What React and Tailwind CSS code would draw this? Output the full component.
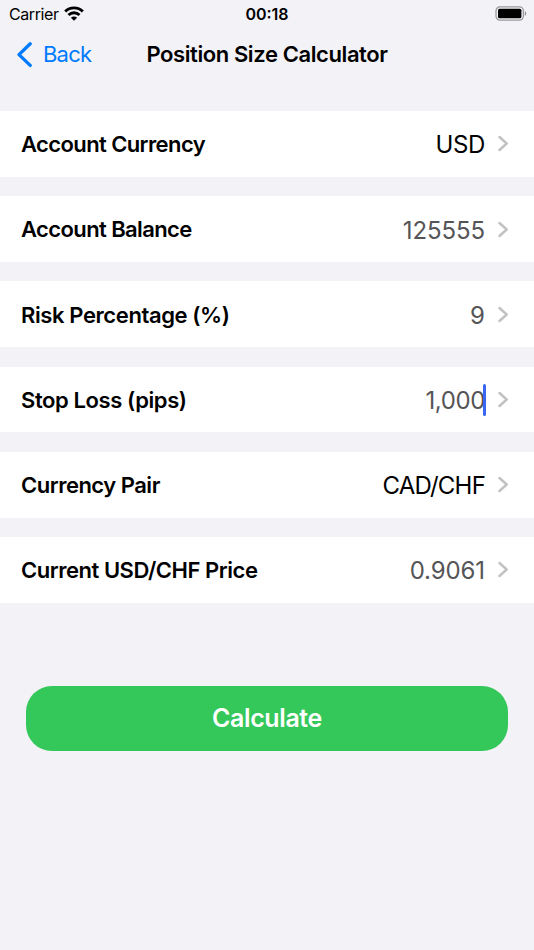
const rows = [
  { label: "Account Currency", value: "USD", labelClass: "tracking-[-0.6px]", valueClass: "tracking-[-0.4px] text-black" },
  { label: "Account Balance", value: "125555", labelClass: "tracking-[-0.6px]", valueClass: "tracking-[-0.1px] text-[#555557]" },
  { label: "Risk Percentage (%)", value: "9", labelClass: "tracking-[-0.4px]", valueClass: "text-[#555557]" },
  { label: "Stop Loss (pips)", value: "1,000", labelClass: "tracking-[-0.4px]", valueClass: "tracking-[-0.4px] text-[#555557]", focused: true },
  { label: "Currency Pair", value: "CAD/CHF", labelClass: "tracking-[-0.5px]", valueClass: "tracking-[-0.8px] text-black" },
  { label: "Current USD/CHF Price", value: "0.9061", labelClass: "tracking-[-0.47px]", valueClass: "tracking-[-0.1px] text-[#555557]" },
];

function WifiIcon() {
  return (
    <svg className="-mt-[2px]" width="20" height="15" viewBox="0 0 20 15" fill="none" stroke="#000" strokeWidth="2.900">
      <path d="M1.200 5.500C6 .6 14 .6 18.800 5.500" />
      <path d="M4.500 9c3.100-3 7.900-3 11 0" />
      <path d="M10 14.700 6.900 11.700c1.700-1.600 4.500-1.600 6.200 0z" fill="#000" stroke="none" />
    </svg>
  );
}

function BatteryIcon() {
  return (
    <svg className="-mt-[2px]" width="32" height="15" viewBox="0 0 32 15" fill="none">
      <rect x="1" y="0.900" width="27.400" height="13.200" rx="4" stroke="#9a9a9d" strokeWidth="1.300" />
      <rect x="3" y="2.800" width="23.400" height="9.400" rx="1.500" fill="#000" />
      <path d="M29.900 5.200c1.700.6 1.700 4 0 4.600z" fill="#8a8a8d" />
    </svg>
  );
}

function StatusBar() {
  return (
    <div className="grid h-7 grid-cols-3 items-center pl-[9px] pr-[7px]">
      <div className="flex items-center gap-[5px] text-[16px] tracking-[-0.4px]">
        Carrier
        <WifiIcon />
      </div>
      <div className="pr-[2px] text-center text-[16px] font-semibold">00:18</div>
      <div className="flex justify-end">
        <BatteryIcon />
      </div>
    </div>
  );
}

function NavBar() {
  return (
    <div className="grid h-[54px] grid-cols-[1fr_auto_1fr] items-center px-4">
      <div className="flex items-center gap-2.5 text-[22px] tracking-[-0.8px] text-[#007aff]">
        <svg width="17" height="26" viewBox="0 0 17 26" fill="none" stroke="currentColor" strokeWidth="3.300">
          <path d="M14.200 1.800 3 12.600l11.200 10.800" strokeLinecap="round" strokeLinejoin="round" />
        </svg>
        <span className="pb-px">Back</span>
      </div>
      <h1 className="pb-px text-[22px] font-[580] tracking-[-0.4px]">Position Size Calculator</h1>
    </div>
  );
}

function Row({ label, value, labelClass, valueClass, focused }) {
  return (
    <div className="flex h-[65.800px] items-center bg-white pl-[21px] pr-[25px]">
      <span className={`flex-1 pt-[1.500px] text-[22px] font-[580] ${labelClass}`}>{label}</span>
      <span className={`pt-[3px] text-[24px] ${valueClass}`}>{value}</span>
      {focused && <span className="-ml-[2px] mt-px h-8 w-[3px] rounded-full bg-[#3a66f2]" />}
      <svg className={focused ? "ml-[12px]" : "ml-[13px]"} width="11" height="17" viewBox="0 0 11 17" fill="none">
        <path d="M1.500 2 8.700 8.500l-7.200 6.500" stroke="#c2c2c5" strokeWidth="2.500" strokeLinecap="round" strokeLinejoin="round" />
      </svg>
    </div>
  );
}

export default function App() {
  return (
    <div className="h-[950px] w-[534px] overflow-hidden bg-[#f2f2f7] font-['Inter',sans-serif] text-black">
      <StatusBar />
      <NavBar />
      <main className="pt-[29px]">
        <div className="flex flex-col gap-[19.400px]">
          {rows.map((row) => (
            <Row key={row.label} {...row} />
          ))}
        </div>
        <div className="px-[26px] pt-[83.600px]">
          <button className="h-[64.800px] w-full rounded-[26px] bg-[#34c759] pt-px text-[25px] font-[580] tracking-[-0.4px] text-white">
            Calculate
          </button>
        </div>
      </main>
    </div>
  );
}
